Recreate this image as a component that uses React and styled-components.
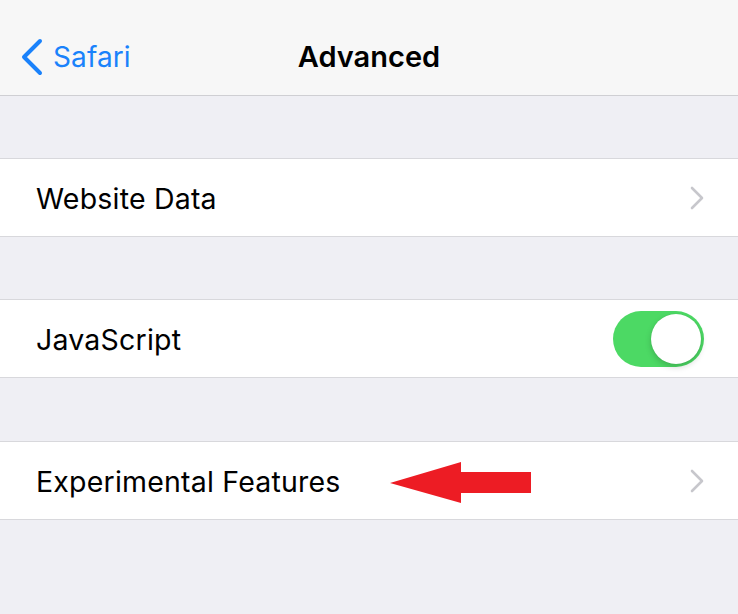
import React from 'react';
import styled, { createGlobalStyle } from 'styled-components';

const GlobalStyle = createGlobalStyle`
  html, body {
    margin: 0;
    padding: 0;
    background: #efeff4;
    font-family: Inter, "Liberation Sans", sans-serif;
    -webkit-font-smoothing: antialiased;
  }
`;

const Screen = styled.div`
  width: 738px;
  height: 614px;
  background: #efeff4;
  overflow: hidden;
`;

const NavBar = styled.div`
  height: 96px;
  background: #f7f7f7;
  border-bottom: 1px solid #cfcfd3;
  display: grid;
  grid-template-columns: 1fr auto 1fr;
  align-items: center;
  padding-top: 18px;
  box-sizing: border-box;
`;

const BackButton = styled.div`
  display: flex;
  align-items: center;
  gap: 10px;
  padding-left: 21px;
  color: #1a82fb;
  font-size: 28px;
  letter-spacing: 0.1px;
`;

const Title = styled.div`
  font-size: 29px;
  font-weight: 600;
  color: #000;
`;

const Group = styled.div`
  margin-top: ${(p) => p.$gap || 62}px;
  background: #fff;
  border-top: 1px solid #d8d8dc;
  border-bottom: 1px solid #d8d8dc;
`;

const Row = styled.div`
  height: 77px;
  display: flex;
  align-items: center;
  padding: 0 33px 0 36px;
`;

const Label = styled.div`
  font-size: 28.5px;
  color: #000;
  letter-spacing: 0.2px;
  padding-top: 2px;
`;

const Spacer = styled.div`
  flex: 1;
`;

const Pointer = styled.svg`
  margin-left: 49px;
  margin-top: 3px;
`;

const Switch = styled.div`
  width: 91px;
  height: 56px;
  border-radius: 28px;
  background: #4cd964;
  position: relative;
  margin-right: 1px;
`;

const Knob = styled.div`
  position: absolute;
  top: 3px;
  right: 3px;
  width: 50px;
  height: 50px;
  border-radius: 50%;
  background: #fff;
  box-shadow: 0 3px 6px rgba(0, 0, 0, 0.18), 0 0 1px rgba(0, 0, 0, 0.1);
`;

const Chevron = () => (
  <svg width="16" height="24" viewBox="0 0 16 24">
    <path d="M3 2 L13 12 L3 22" fill="none" stroke="#c7c7cc" strokeWidth="2.6" strokeLinecap="round" strokeLinejoin="round" />
  </svg>
);

const BackChevron = () => (
  <svg width="22" height="38" viewBox="0 0 22 38">
    <path d="M19 3 L3 19 L19 35" fill="none" stroke="#1a82fb" strokeWidth="4" strokeLinecap="round" strokeLinejoin="round" />
  </svg>
);

export default function App() {
  return (
    <Screen>
      <GlobalStyle />
      <NavBar>
        <BackButton>
          <BackChevron />
          <span>Safari</span>
        </BackButton>
        <Title>Advanced</Title>
        <div />
      </NavBar>

      <Group>
        <Row>
          <Label>Website Data</Label>
          <Spacer />
          <Chevron />
        </Row>
      </Group>

      <Group>
        <Row>
          <Label>JavaScript</Label>
          <Spacer />
          <Switch>
            <Knob />
          </Switch>
        </Row>
      </Group>

      <Group $gap={63}>
        <Row>
          <Label>Experimental Features</Label>
          <Pointer width="141" height="41" viewBox="0 0 141 41">
            <polygon points="0,21 71,0 71,10 141,10 141,31 71,31 71,41" fill="#ed1c24" />
          </Pointer>
          <Spacer />
          <Chevron />
        </Row>
      </Group>
    </Screen>
  );
}
